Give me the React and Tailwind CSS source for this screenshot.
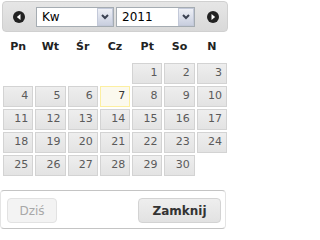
import React from 'react';

const dayNames = ['Pn', 'Wt', 'Śr', 'Cz', 'Pt', 'So', 'N'];

// kwiecień 2011 zaczyna się w piątek
const days = [null, null, null, null, 1, 2, 3];
for (let d = 4; d <= 30; d++) days.push(d);

function CircleArrow({ dir }) {
  return (
    <svg width="12" height="12" viewBox="0 0 12 12">
      <circle cx="6" cy="6" r="6" fill="#222" />
      {dir === 'left' ? (
        <polygon points="7.5,3 7.5,9 3.8,6" fill="#fff" />
      ) : (
        <polygon points="4.5,3 4.5,9 8.2,6" fill="#fff" />
      )}
    </svg>
  );
}

function Combo({ value, width }) {
  return (
    <div
      className={`flex h-[20px] items-stretch border border-[#a5acb2] bg-white ${width}`}
    >
      <span className="flex-1 pl-[5px] text-[12px] leading-[18px] text-black">{value}</span>
      <span className="flex w-[16px] items-center justify-center border border-[#c3c9d9] bg-gradient-to-b from-[#eef0f6] to-[#c9cfdf]">
        <svg width="8" height="6" viewBox="0 0 8 6">
          <polyline points="1,1 4,4 7,1" fill="none" stroke="#3b4252" strokeWidth="2" />
        </svg>
      </span>
    </div>
  );
}

export default function App() {
  return (
    <div className="relative h-[230px] w-[229px] overflow-hidden bg-white font-['DejaVu_Sans',_Verdana,_sans-serif]">
      <div className="ml-[2px] mt-[1px] flex h-[31px] w-[226px] items-center rounded-[4px] border border-[#d0d0d0] bg-gradient-to-b from-[#e6e6e6] to-[#d9d9d9] pl-[10px]">
        <CircleArrow dir="left" />
        <div className="ml-[11px] flex gap-[2px]">
          <Combo value="Kw" width="w-[78px]" />
          <Combo value="2011" width="w-[79px]" />
        </div>
        <div className="ml-[12px]">
          <CircleArrow dir="right" />
        </div>
      </div>

      <div className="ml-[3px] mt-[5px] grid h-[21px] w-[224px] grid-cols-7 gap-x-[2px]">
        {dayNames.map((n) => (
          <div key={n} className="flex items-center justify-center text-[11px] font-bold text-[#222]">
            {n}
          </div>
        ))}
      </div>

      <div className="ml-[3px] mt-[5px] grid w-[224px] grid-cols-7 gap-[2px]">
        {days.map((d, i) =>
          d === null ? (
            <div key={'e' + i} className="h-[21px]" />
          ) : d === 7 ? (
            <div
              key={d}
              className="flex h-[21px] items-center justify-end border border-[#fcefa1] bg-[#fbf9ee] pr-[4px] text-[11px] text-[#363636]"
            >
              {d}
            </div>
          ) : (
            <div
              key={d}
              className="flex h-[21px] items-center justify-end border border-[#d3d3d3] bg-gradient-to-b from-[#eeeeee] to-[#e3e3e3] pr-[4px] text-[11px] text-[#5a5a5a]"
            >
              {d}
            </div>
          )
        )}
      </div>

      <div className="mt-[14px] flex h-[39px] w-[226px] items-start justify-between rounded-[4px] border-y border-x border-y-[#c4c4c4] border-x-[#e4e4e4] pl-[6px] pr-[4px] pt-[7px]">
        <button className="h-[25px] w-[50px] rounded-[4px] border border-[#e2e2e2] bg-[#f3f3f3] text-[12px] text-[#a8a8a8]">
          Dziś
        </button>
        <button className="h-[25px] w-[83px] rounded-[4px] border border-[#d3d3d3] bg-gradient-to-b from-[#eeeeee] to-[#e2e2e2] text-[12px] font-bold text-[#333]">
          Zamknij
        </button>
      </div>
    </div>
  );
}
